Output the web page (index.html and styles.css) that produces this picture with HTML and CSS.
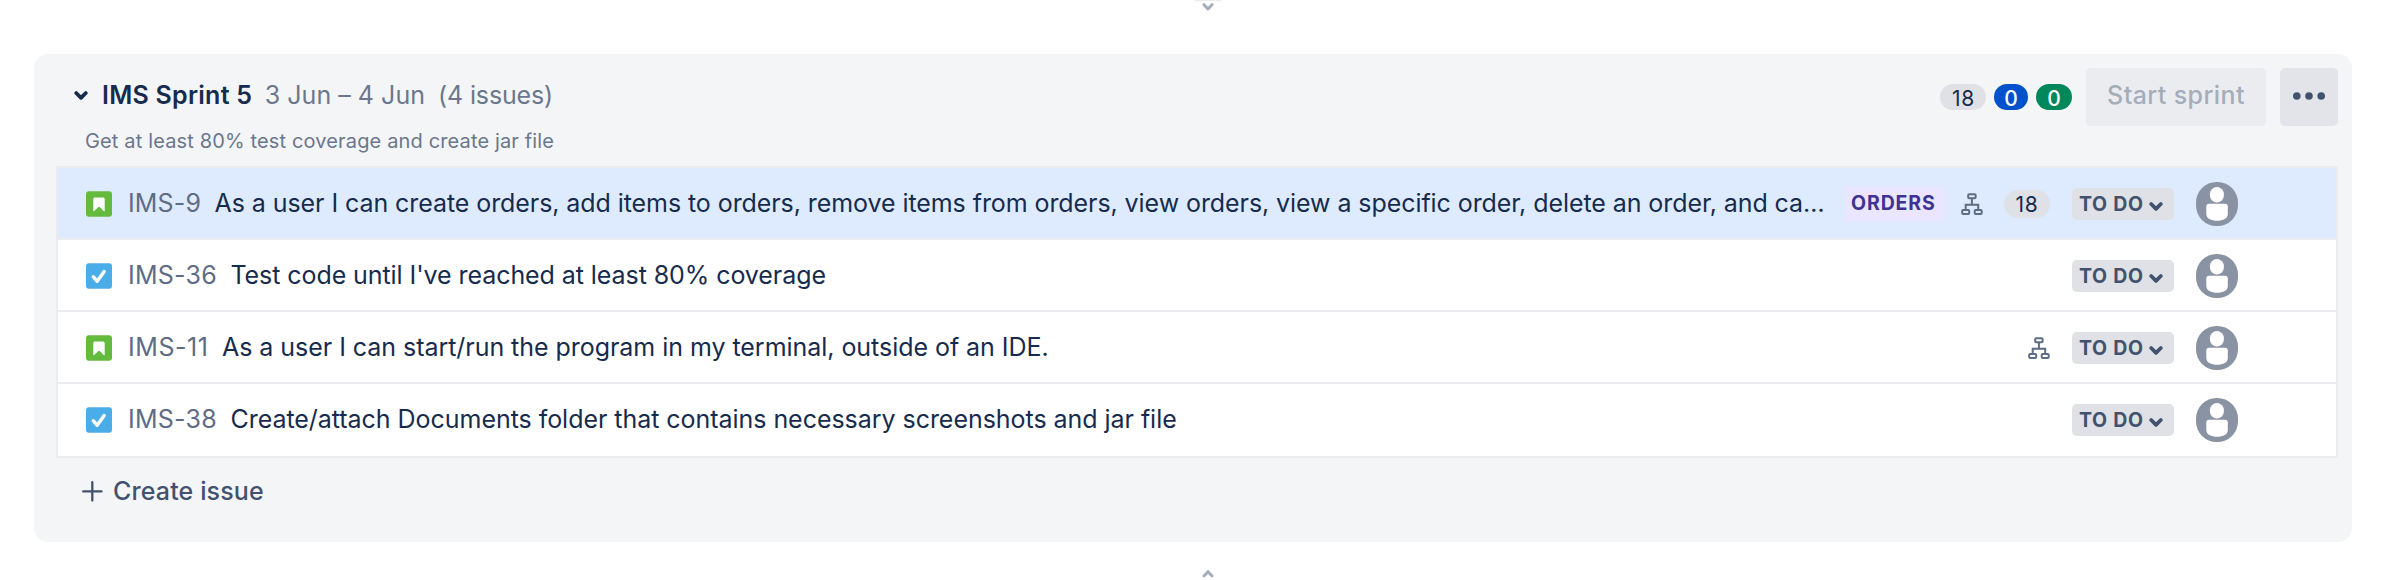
FILE: index.html
```html
<!DOCTYPE html>
<html lang="en">
<head>
<meta charset="utf-8">
<title>IMS Sprint 5</title>
<link rel="stylesheet" href="styles.css">
</head>
<body>
<svg class="defs" width="0" height="0">
  <symbol id="story" viewBox="0 0 26 26">
    <rect width="26" height="25.5" y=".2" rx="3" fill="#63ba3c"/>
    <path d="M7.300 8.200c0-1 .7-1.700 1.700-1.700h8c1 0 1.700.7 1.700 1.700v11.600c0 .5-.5.7-.9.3L13 15.600l-4.800 4.500c-.4.4-.9.2-.9-.3z" fill="#fff"/>
  </symbol>
  <symbol id="task" viewBox="0 0 26 26">
    <rect width="26" height="25.500" y=".2" rx="3" fill="#4bade8"/>
    <path d="M7.200 13.700l4 4.600 7-9.700" fill="none" stroke="#fff" stroke-width="3.400" stroke-linecap="round" stroke-linejoin="round"/>
  </symbol>
  <symbol id="tree" viewBox="0 0 22 22">
    <g fill="none" stroke="#5e6c84" stroke-width="2">
      <rect x="7.200" y="1.300" width="7.400" height="4" rx="1"/>
      <rect x="1.200" y="17" width="7" height="4" rx="1"/>
      <rect x="13.700" y="17" width="7" height="4" rx="1"/>
      <path d="M10.900 5.500v5.700M4.700 17v-5.300h12.500V17"/>
    </g>
  </symbol>
  <symbol id="person" viewBox="0 0 42 44">
    <rect width="42" height="44" rx="20.500" ry="20.500" fill="#8993a4"/>
    <ellipse cx="20.900" cy="12.700" rx="7.100" ry="7.700" fill="#fff"/>
    <path d="M13 21.700h16.200q2.600 0 2.600 2.600v7.700c0 4.500-4.800 6.800-10.700 6.800s-10.800-2.300-10.800-6.800v-7.700q0-2.600 2.700-2.600z" fill="#fff"/>
  </symbol>
  <symbol id="down" viewBox="0 0 14 9">
    <path d="M2.200 2l4.800 4.900 4.800-4.900" fill="none" stroke="currentColor" stroke-width="3.700" stroke-linecap="round" stroke-linejoin="round"/>
  </symbol>
</svg>

<div class="resizer top"><svg width="12" height="8"><path d="M2 1.700l4 4.300 4-4.300" /></svg></div>

<section class="sprint">
  <header class="head">
    <svg class="toggle" width="14" height="9"><use href="#down"/></svg>
    <h2 class="name">IMS Sprint 5</h2>
    <span class="dates">3 Jun – 4 Jun</span>
    <span class="count">(4 issues)</span>
    <div class="actions">
      <span class="pill todo-points">18</span>
      <span class="pill progress-points">0</span>
      <span class="pill done-points">0</span>
      <button class="start" disabled>Start sprint</button>
      <button class="more" aria-label="More"><svg width="32" height="8" fill="#42526e"><circle cx="3.800" cy="4" r="3.800"/><circle cx="16" cy="4" r="3.800"/><circle cx="28.200" cy="4" r="3.800"/></svg></button>
    </div>
  </header>
  <p class="goal">Get at least 80% test coverage and create jar file</p>

  <div class="list">
    <div class="row selected">
      <svg class="type" width="26" height="26"><use href="#story"/></svg>
      <span class="key">IMS-9</span>
      <span class="summary tight">As a user I can create orders, add items to orders, remove items from orders, view orders, view a specific order, delete an order, and ca…</span>
      <span class="epic">ORDERS</span>
      <svg class="tree" width="22" height="22"><use href="#tree"/></svg>
      <span class="estimate">18</span>
      <span class="status">TO DO<svg width="14" height="9"><use href="#down"/></svg></span>
      <svg class="avatar" width="42" height="44"><use href="#person"/></svg>
    </div>
    <div class="row">
      <svg class="type" width="26" height="26"><use href="#task"/></svg>
      <span class="key wide">IMS-36</span>
      <span class="summary tight">Test code until I've reached at least 80% coverage</span>
      <span class="status push">TO DO<svg width="14" height="9"><use href="#down"/></svg></span>
      <svg class="avatar" width="42" height="44"><use href="#person"/></svg>
    </div>
    <div class="row">
      <svg class="type" width="26" height="26"><use href="#story"/></svg>
      <span class="key ones">IMS-11</span>
      <span class="summary">As a user I can start/run the program in my terminal, outside of an IDE.</span>
      <svg class="tree push" width="22" height="22"><use href="#tree"/></svg>
      <span class="status">TO DO<svg width="14" height="9"><use href="#down"/></svg></span>
      <svg class="avatar" width="42" height="44"><use href="#person"/></svg>
    </div>
    <div class="row">
      <svg class="type" width="26" height="26"><use href="#task"/></svg>
      <span class="key wide">IMS-38</span>
      <span class="summary">Create/attach Documents folder that contains necessary screenshots and jar file</span>
      <span class="status push">TO DO<svg width="14" height="9"><use href="#down"/></svg></span>
      <svg class="avatar" width="42" height="44"><use href="#person"/></svg>
    </div>
  </div>

  <div class="create">
    <svg width="21" height="21"><path d="M10.300 1.200v18.300M1.200 10.400h18.300" fill="none" stroke="#42526e" stroke-width="2.300" stroke-linecap="round"/></svg>
    <span>Create issue</span>
  </div>
</section>

<div class="resizer bottom"><svg width="12" height="8"><path d="M2 6l4-4.300 4 4.300"/></svg></div>
</body>
</html>
```
FILE: styles.css
```css
* { box-sizing: border-box; }
body {
  margin: 0;
  height: 580px;
  overflow: hidden;
  background: #fff;
  color: #172b4d;
  font: 25px/30px Inter, "Liberation Sans", sans-serif;
}
svg { display: block; flex: none; }
.defs { position: absolute; }

.resizer {
  display: flex;
  justify-content: center;
  width: 26px;
  margin-left: 1195px;
}
.resizer path {
  fill: none;
  stroke: #a5adba;
  stroke-width: 3;
  stroke-linecap: round;
  stroke-linejoin: round;
}
.resizer.top { height: 54px; border-top: 1px solid #ebecf0; padding-top: 2px; }
.resizer.bottom { height: 38px; padding-top: 28px; }

.sprint {
  height: 488px;
  margin: 0 32px 0 34px;
  padding: 14px 14px 0 22px;
  background: #f4f5f7;
  border-radius: 14px;
}
.head {
  display: flex;
  align-items: center;
  height: 58px;
  padding-left: 18px;
  white-space: nowrap;
}
.toggle { margin: -4px 14px 0 0; color: #172b4d; }
.name { margin: -4px 0 0; font-size: 25px; font-weight: 600; letter-spacing: 0.25px; }
.dates, .count { margin-top: -4px; color: #6b778c; }
.dates { margin-left: 12.500px; letter-spacing: 0.03px; }
.count { margin-left: 13px; letter-spacing: -0.14px; }
.actions { display: flex; align-items: center; margin-left: auto; }
.pill {
  height: 26px;
  padding-top: 2px;
  border-radius: 13px;
  font-size: 21px;
  line-height: 26px;
  text-align: center;
}
.todo-points { width: 46px; margin-right: 8px; padding-left: 1px; background: #dfe1e6; letter-spacing: 0.8px; }
.progress-points { width: 34px; margin-right: 8px; background: #0052cc; color: #fff; font-weight: 500; }
.done-points { width: 36px; margin-right: 14px; background: #00875a; color: #fff; font-weight: 500; }
button { height: 58px; padding: 0; border: 0; border-radius: 5px; font: inherit; }
.start {
  width: 180px;
  padding-bottom: 4px;
  margin-right: 14px;
  background: #ebecf0;
  color: #a5adba;
  font-weight: 500;
  letter-spacing: 0.4px;
}
.more {
  display: flex;
  align-items: center;
  justify-content: center;
  width: 58px;
  padding-bottom: 2px;
  background: #e2e4e9;
}
.goal {
  height: 40px;
  margin: 0;
  padding: 3px 0 0 29px;
  color: #6b778c;
  font-size: 20px;
  line-height: 24px;
  letter-spacing: 0.145px;
}

.list { border: 2px solid #ebecf0; background: #fff; }
.row {
  display: flex;
  align-items: center;
  height: 72px;
  padding: 2px 98px 0 28px;
  border-bottom: 2px solid #ebecf0;
  white-space: nowrap;
}
.row:last-child { padding-bottom: 2px; border-bottom: 0; }
.selected { background: #deebff; }
.key { margin: -2px 0 0 16px; color: #5e6c84; letter-spacing: 0.15px; }
.key.wide { letter-spacing: 0.25px; }
.key.ones { letter-spacing: 0.55px; }
.summary { margin: -2px 0 0 13.500px; letter-spacing: -0.04px; }
.summary.tight { letter-spacing: -0.074px; }
.epic {
  width: 100px;
  height: 36px;
  margin: 0 16px 0 auto;
  padding-left: 6px;
  border-radius: 5px;
  background: #eae6ff;
  color: #403294;
  font-size: 19.500px;
  font-weight: 700;
  line-height: 34px;
  letter-spacing: 0.9px;
}
.estimate {
  width: 46px;
  height: 28px;
  margin-left: 21px;
  border-radius: 14px;
  background: #dfe1e6;
  font-size: 21px;
  line-height: 29px;
  letter-spacing: 0.8px;
  text-align: center;
}
.status {
  display: flex;
  align-items: center;
  width: 102px;
  height: 32px;
  margin-left: 22px;
  padding: 0 0 1px 7px;
  border-radius: 5px;
  background: #dfe1e6;
  color: #42526e;
  font-size: 19.500px;
  font-weight: 700;
  letter-spacing: 0.7px;
}
.status svg { margin: 5px 0 0 5px; }
.avatar { margin-left: 22px; }
.push { margin-left: auto; }

.create {
  display: flex;
  align-items: center;
  height: 66px;
  padding-left: 26px;
  color: #42526e;
  font-weight: 500;
  letter-spacing: 0.13px;
}
.create span { margin-left: 10px; }
```
